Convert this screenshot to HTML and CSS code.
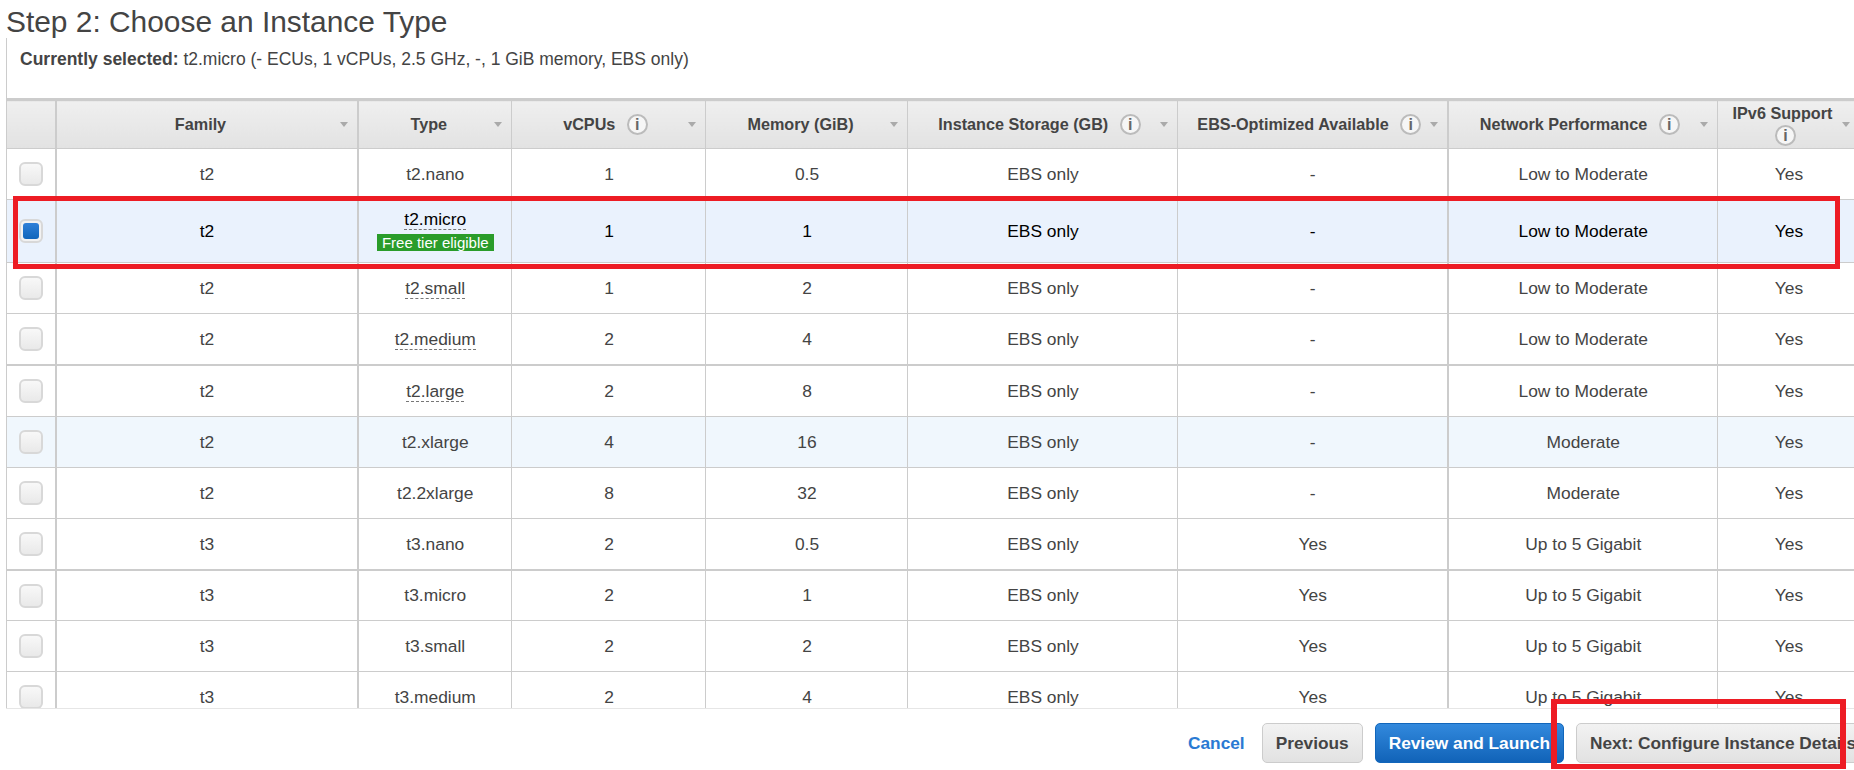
FILE: index.html
```html
<!DOCTYPE html>
<html lang="en">
<head>
    <meta charset="UTF-8">
    <title>Step 2: Choose an Instance Type</title>
    <link rel="stylesheet" href="styles.css">
</head>
<body>

<h1 class="step-title">Step 2: Choose an Instance Type</h1>

<div class="selected-bar">
    <b>Currently selected:</b> t2.micro (- ECUs, 1 vCPUs, 2.5 GHz, -, 1 GiB memory, EBS only)
</div>

<div class="table-wrap">
    <table class="types">
        <colgroup>
            <col class="col-check">
            <col class="col-family">
            <col class="col-type">
            <col class="col-vcpu">
            <col class="col-memory">
            <col class="col-storage">
            <col class="col-ebs">
            <col class="col-network">
            <col class="col-ipv6">
        </colgroup>
        <thead>
            <tr>
                <th></th>
                <th><div class="th-inner"><span class="th-label">Family</span><span class="sort"></span></div></th>
                <th><div class="th-inner"><span class="th-label">Type</span><span class="sort"></span></div></th>
                <th><div class="th-inner"><span class="th-label">vCPUs <i class="info">i</i></span><span class="sort"></span></div></th>
                <th><div class="th-inner"><span class="th-label">Memory (GiB)</span><span class="sort"></span></div></th>
                <th><div class="th-inner"><span class="th-label">Instance Storage (GB) <i class="info">i</i></span><span class="sort"></span></div></th>
                <th><div class="th-inner"><span class="th-label">EBS-Optimized Available <i class="info">i</i></span><span class="sort"></span></div></th>
                <th><div class="th-inner"><span class="th-label">Network Performance <i class="info">i</i></span><span class="sort"></span></div></th>
                <th><div class="th-inner"><span class="th-label">IPv6 Support <i class="info">i</i></span><span class="sort"></span></div></th>
            </tr>
        </thead>
        <tbody>
            <tr>
                <td><span class="check"></span></td><td>t2</td><td>t2.nano</td><td>1</td><td>0.5</td><td>EBS only</td><td>-</td><td>Low to Moderate</td><td>Yes</td>
            </tr>
            <tr class="selected">
                <td><span class="check on"></span></td><td>t2</td><td><span class="dotted">t2.micro</span><br><span class="free-tier">Free tier eligible</span></td><td>1</td><td>1</td><td>EBS only</td><td>-</td><td>Low to Moderate</td><td>Yes</td>
            </tr>
            <tr>
                <td><span class="check"></span></td><td>t2</td><td><span class="dotted">t2.small</span></td><td>1</td><td>2</td><td>EBS only</td><td>-</td><td>Low to Moderate</td><td>Yes</td>
            </tr>
            <tr>
                <td><span class="check"></span></td><td>t2</td><td><span class="dotted">t2.medium</span></td><td>2</td><td>4</td><td>EBS only</td><td>-</td><td>Low to Moderate</td><td>Yes</td>
            </tr>
            <tr class="thick">
                <td><span class="check"></span></td><td>t2</td><td><span class="dotted">t2.large</span></td><td>2</td><td>8</td><td>EBS only</td><td>-</td><td>Low to Moderate</td><td>Yes</td>
            </tr>
            <tr class="hover">
                <td><span class="check"></span></td><td>t2</td><td>t2.xlarge</td><td>4</td><td>16</td><td>EBS only</td><td>-</td><td>Moderate</td><td>Yes</td>
            </tr>
            <tr>
                <td><span class="check"></span></td><td>t2</td><td>t2.2xlarge</td><td>8</td><td>32</td><td>EBS only</td><td>-</td><td>Moderate</td><td>Yes</td>
            </tr>
            <tr>
                <td><span class="check"></span></td><td>t3</td><td>t3.nano</td><td>2</td><td>0.5</td><td>EBS only</td><td>Yes</td><td>Up to 5 Gigabit</td><td>Yes</td>
            </tr>
            <tr class="thick short">
                <td><span class="check"></span></td><td>t3</td><td>t3.micro</td><td>2</td><td>1</td><td>EBS only</td><td>Yes</td><td>Up to 5 Gigabit</td><td>Yes</td>
            </tr>
            <tr>
                <td><span class="check"></span></td><td>t3</td><td>t3.small</td><td>2</td><td>2</td><td>EBS only</td><td>Yes</td><td>Up to 5 Gigabit</td><td>Yes</td>
            </tr>
            <tr>
                <td><span class="check"></span></td><td>t3</td><td>t3.medium</td><td>2</td><td>4</td><td>EBS only</td><td>Yes</td><td>Up to 5 Gigabit</td><td>Yes</td>
            </tr>
        </tbody>
    </table>
</div>

<div class="footer">
    <a class="cancel">Cancel</a>
    <button class="btn">Previous</button>
    <button class="btn primary">Review and Launch</button>
    <button class="btn">Next: Configure Instance Details</button>
</div>

<!-- red marks drawn over the screenshot -->
<div class="mark mark-row"></div>
<div class="mark mark-next"></div>

</body>
</html>
```

FILE: styles.css
```css
html, body {
    margin: 0;
    height: 770px;
    overflow: hidden;
    background: #fff;
}

body {
    position: relative;
    font-family: "Liberation Sans", Arial, sans-serif;
    color: #444;
}

.step-title {
    margin: 0;
    height: 38px;
    padding-left: 6px;
    font-size: 29.9px;
    font-weight: normal;
    line-height: 44px;
    color: #444;
}

.selected-bar {
    height: 60px;
    margin-left: 6px;
    padding: 11px 0 0 13px;
    box-sizing: border-box;
    border-left: 1px solid #ccc;
    font-size: 17.5px;
    line-height: 20px;
}

.table-wrap {
    height: 611px;
    margin-left: 6px;
    overflow: hidden;
    border-bottom: 1px solid #e6e6e6;
    box-sizing: border-box;
}

.types {
    table-layout: fixed;
    width: 1853px;
    border-collapse: collapse;
    font-size: 17.4px;
}

.col-check { width: 49px; }
.col-family { width: 302px; }
.col-type { width: 154px; }
.col-vcpu { width: 194px; }
.col-memory { width: 202px; }
.col-storage { width: 270px; }
.col-ebs { width: 270px; }
.col-network { width: 270px; }
.col-ipv6 { width: 142px; }

th, td {
    border: 1px solid #ccc;
    padding: 0;
    text-align: center;
}

td {
    padding-left: 1px;
}

th:nth-child(2), td:nth-child(2),
th:nth-child(3), td:nth-child(3),
th:nth-child(8), td:nth-child(8) {
    border-left-width: 2px;
}

th {
    height: 47px;
    border-top: 3px solid #ccc;
    background: linear-gradient(#efefef, #e2e2e2);
    font-size: 16.2px;
    line-height: 22px;
    color: #444;
}

td {
    height: 50px;
}

tr.thick td {
    border-top-width: 2px;
}

tr.short td {
    height: 49px;
}

tr.selected td {
    height: 62px;
    background: #eaf2fd;
    color: #000;
}

tr.hover td {
    background: #f0f7fd;
}

.th-inner {
    display: flex;
    align-items: center;
    padding: 0 9px 1px 5px;
}

.th-label {
    flex: 1;
}

.sort {
    width: 0;
    height: 0;
    border-left: 4px solid transparent;
    border-right: 4px solid transparent;
    border-top: 5px solid #aaa;
}

.info {
    display: inline-block;
    box-sizing: border-box;
    width: 21px;
    height: 21px;
    margin: -3px -6px -3px 7px;
    border: 2px solid #bbb;
    border-radius: 50%;
    background: #f6f6f6;
    font-family: "Liberation Sans", Arial, sans-serif;
    font-size: 16px;
    font-style: normal;
    font-weight: bold;
    line-height: 17px;
    color: #666;
    vertical-align: 0;
}

th:last-child .info {
    margin-left: 6px;
    margin-right: 0;
}

.check {
    display: block;
    box-sizing: border-box;
    width: 24px;
    height: 24px;
    margin: 0 auto 0 11px;
    padding: 3px;
    border: 2px solid #d8d8d8;
    border-radius: 6px;
    background: linear-gradient(#f8f8f8, #e9e9e9);
}

.check.on {
    background: #f2f2f2;
    padding: 2px;
}

.check.on::before {
    content: "";
    display: block;
    height: 100%;
    border-radius: 3px;
    background: linear-gradient(#2f80d8, #1166bb);
}

.dotted {
    border-bottom: 1px dashed #777;
}

.free-tier {
    display: inline-block;
    margin-top: 4px;
    padding: 0 5px;
    background: #2a9c2a;
    font-size: 15px;
    line-height: 17px;
    color: #fff;
}

.footer {
    display: flex;
    align-items: center;
    gap: 12px;
    padding: 14px 0 0 1188px;
    white-space: nowrap;
}

.cancel {
    margin-right: 5px;
    font-size: 17.3px;
    font-weight: bold;
    color: #2a7ad3;
}

.btn {
    flex: none;
    height: 40px;
    padding: 0 13px;
    border: 1px solid #ccc;
    border-radius: 5px;
    background: linear-gradient(#f2f2f2, #e2e2e2);
    font-family: "Liberation Sans", Arial, sans-serif;
    font-size: 17.3px;
    font-weight: bold;
    color: #444;
}

.btn.primary {
    border-color: #1166bb;
    background: linear-gradient(#3289dd, #1163b8);
    color: #fff;
}

.mark {
    position: absolute;
    box-sizing: border-box;
    border: 5px solid #ed1c24;
}

.mark-row {
    left: 13px;
    top: 196px;
    width: 1827px;
    height: 73px;
}

.mark-next {
    left: 1551px;
    top: 699px;
    width: 295px;
    height: 70px;
    border-width: 5px 6px;
}
```
